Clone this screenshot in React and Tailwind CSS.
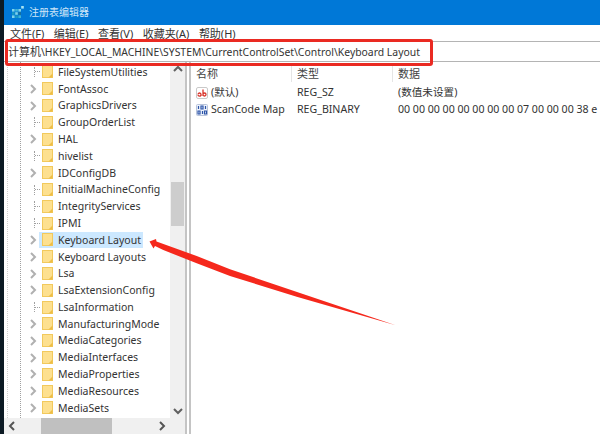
const FONT = "font-['Noto_Sans','Noto_Sans_CJK_SC',sans-serif]";

const treeRows = [
  { name: 'FileSystemUtilities' },
  { name: 'FontAssoc', kids: true },
  { name: 'GraphicsDrivers', kids: true },
  { name: 'GroupOrderList' },
  { name: 'HAL', kids: true },
  { name: 'hivelist' },
  { name: 'IDConfigDB', kids: true },
  { name: 'InitialMachineConfig' },
  { name: 'IntegrityServices' },
  { name: 'IPMI' },
  { name: 'Keyboard Layout', kids: true, selected: true },
  { name: 'Keyboard Layouts', kids: true },
  { name: 'Lsa', kids: true },
  { name: 'LsaExtensionConfig', kids: true },
  { name: 'LsaInformation' },
  { name: 'ManufacturingMode', kids: true },
  { name: 'MediaCategories', kids: true },
  { name: 'MediaInterfaces', kids: true },
  { name: 'MediaProperties', kids: true },
  { name: 'MediaResources', kids: true },
  { name: 'MediaSets', kids: true },
];

const menus = ['文件(F)', '编辑(E)', '查看(V)', '收藏夹(A)', '帮助(H)'];

function AppIcon() {
  return (
    <svg width="12" height="12" viewBox="0 0 12 12" className="shrink-0 -mt-[1px]">
      <rect x="0" y="3" width="2.6" height="2.6" fill="#7fd3e8" />
      <rect x="3.2" y="3" width="2.6" height="2.6" fill="#3fb4d6" />
      <rect x="6.4" y="3" width="2.6" height="2.6" fill="#7fd3e8" />
      <rect x="0" y="6.2" width="2.6" height="2.6" fill="#1a9ac4" />
      <rect x="3.2" y="6.2" width="2.6" height="2.6" fill="#7fd3e8" />
      <rect x="6.4" y="6.2" width="2.6" height="2.6" fill="#1a6f9a" />
      <rect x="0" y="9.4" width="2.6" height="2.6" fill="#7fd3e8" />
      <rect x="3.2" y="9.4" width="2.6" height="2.6" fill="#1a9ac4" />
      <rect x="6.4" y="9.4" width="2.6" height="2.6" fill="#3fb4d6" />
      <rect x="9.2" y="0" width="2.6" height="2.6" fill="#a8e4f2" />
    </svg>
  );
}

function Folder() {
  return (
    <svg width="11" height="13" viewBox="0 0 11 13" className="shrink-0">
      <rect x="0.5" y="0.5" width="10" height="12" fill="#fde08f" stroke="#f2c95c" />
      <path d="M6.5 12.5 L10.5 8.5 L10.5 12.5 Z" fill="#eebd45" />
    </svg>
  );
}

function Chevron({ dir = 'right', className = '', color = '#b0b0b0' }) {
  const paths = {
    right: 'M2 1 L6 5 L2 9',
    left: 'M6 1 L2 5 L6 9',
    up: 'M1 6 L5 2 L9 6',
    down: 'M1 3 L5 7 L9 3',
  };
  return (
    <svg width="10" height="10" viewBox="0 0 10 10" fill="none" className={className}>
      <path d={paths[dir]} stroke={color} strokeWidth="2" />
    </svg>
  );
}

function TreeRow({ row }) {
  return (
    <div className="flex h-[16.8px] items-center">
      <div className="flex w-[34px] shrink-0 items-center justify-end">
        {row.kids ? (
          <Chevron className="-mr-[1px]" />
        ) : (
          <div className="-mr-[2px] flex h-[10px] w-[6px] items-center border-l border-dotted border-[#a0a0a0]">
            <div className="w-full border-t border-dotted border-[#a0a0a0]" />
          </div>
        )}
      </div>
      <div className={`ml-[1px] flex h-[16.8px] items-center gap-[5px] pl-[3px] pr-[2px] ${row.selected ? 'bg-[#cce8ff]' : ''}`}>
        <Folder />
        <span className="whitespace-nowrap text-[10.5px] leading-none text-[#333]">{row.name}</span>
      </div>
    </div>
  );
}

function ListRow({ icon, name, type, data }) {
  return (
    <div className="flex h-[17px] items-center text-[10.6px] leading-none text-[#333]">
      <div className="flex w-[101px] shrink-0 items-center gap-[3px] pl-[5px]">
        {icon}
        <span className="whitespace-nowrap">{name}</span>
      </div>
      <div className="w-[101px] shrink-0 pl-[5px] whitespace-nowrap">{type}</div>
      <div className="whitespace-nowrap pl-[5px]">{data}</div>
    </div>
  );
}

function AbIcon() {
  return (
    <svg width="12" height="12" viewBox="0 0 12 12" className="shrink-0">
      <rect x="0.5" y="0.5" width="11" height="11" rx="1.5" fill="#fff" stroke="#c9c9c9" />
      <path d="M2 7.5 C2 5.5 5 5.5 5 7.5 L5 9 M2 8 C2 9.5 5 9.5 5 8" stroke="#d8332a" strokeWidth="1.3" fill="none" />
      <path d="M7 2.5 L7 9 M7 7.5 C7 5.5 10 5.5 10 7.5 C10 9.5 7 9.5 7 7.5" stroke="#d8332a" strokeWidth="1.3" fill="none" />
    </svg>
  );
}

function BinIcon() {
  return (
    <svg width="12" height="12" viewBox="0 0 12 12" className="shrink-0">
      <rect x="0.5" y="0.5" width="11" height="11" rx="1" fill="#eef3fb" stroke="#b9c4da" />
      <path d="M2.5 2 L2.5 5 M5 2 h2 v3 h-2 z M9.5 2 L9.5 5 M2 7 h2 v3 h-2 z M6.5 7 L6.5 10 M8.5 7 h2 v3 h-2 z" stroke="#2b53a8" strokeWidth="1.2" fill="none" />
    </svg>
  );
}

function Annotations() {
  return (
    <>
      <div className="pointer-events-none absolute left-[5px] top-[39px] h-[27px] w-[428px] rounded-[3px] border-[3px] border-[#ea2a22]" />
      <svg width="600" height="434" className="pointer-events-none absolute left-0 top-0">
        <path
          d="M149.5 241.5 L156 239 L156.5 241.5 L196.7 256 L230 269.3 L395.7 325.3 L296.7 296.7 L230 276 L196.7 263.3 L163.3 250 L155 246 L153.5 248.5 Z"
          fill="#f5281c"
        />
      </svg>
    </>
  );
}

export default function App() {
  return (
    <div className={`relative flex h-[434px] w-[600px] overflow-hidden bg-white ${FONT}`}>
      <div className="h-full w-[4px] shrink-0 bg-[#0c1a24]" />
      <div className="flex min-w-0 flex-1 flex-col">
        <div className="flex h-[25px] shrink-0 items-center gap-[5px] bg-[#0078d7] pb-[1px] pl-[8px]">
          <AppIcon />
          <span className="text-[10px] leading-none text-[#cfe6f8]">注册表编辑器</span>
        </div>

        <div className="flex h-[16px] shrink-0 items-center gap-[9.5px] pl-[6px] text-[11px] leading-none text-[#333]">
          {menus.map((m) => (
            <span key={m} className="whitespace-nowrap">{m}</span>
          ))}
        </div>

        <div className="flex h-[21px] shrink-0 items-center border-y border-[#b4b4b4] pl-[4px] text-[10.4px] leading-none text-[#333]">
          <span className="whitespace-nowrap"><span className="text-[11px]">计算机</span>\HKEY_LOCAL_MACHINE\SYSTEM\CurrentControlSet\Control\Keyboard Layout</span>
        </div>

        <div className="flex min-h-0 flex-1">
          <div className="flex w-[181px] shrink-0 flex-col">
            <div className="flex min-h-0 flex-1">
              <div className="relative w-[166px] shrink-0 overflow-hidden pt-[1.6px]">
                <div className="absolute bottom-0 left-[3px] top-0 border-l border-dotted border-[#d0d0d0]" />
                <div className="absolute bottom-0 left-[16px] top-0 border-l border-dotted border-[#a0a0a0]" />
                {treeRows.map((row) => (
                  <TreeRow key={row.name} row={row} />
                ))}
              </div>
              <div className="flex w-[15px] shrink-0 flex-col items-center bg-[#f0f0f0] pt-[3px]">
                <Chevron dir="up" color="#606060" />
                <div className="mt-[107px] h-[44px] w-[13px] bg-[#cdcdcd]" />
                <div className="flex-1" />
                <Chevron dir="down" color="#606060" className="mb-[2px]" />
              </div>
            </div>
            <div className="flex h-[16px] shrink-0 items-center bg-[#f0f0f0] pl-[4px] pr-[17px]">
              <Chevron dir="left" color="#555" />
              <div className="ml-[23px] h-[16px] w-[71px] bg-[#c0c0c0]" />
              <div className="flex-1" />
              <Chevron dir="right" color="#555" />
            </div>
          </div>

          <div className="flex w-[6px] shrink-0 justify-between bg-white">
            <div className="w-[2px] bg-[#c4c4c4]" />
            <div className="w-[2px] bg-[#c4c4c4]" />
          </div>

          <div className="min-w-0 flex-1 overflow-hidden">
            <div className="flex h-[22px] items-center text-[11px] leading-none text-[#444]">
              <div className="w-[101px] shrink-0 border-r border-[#e5e5e5] pl-[5px] leading-[17px]">名称</div>
              <div className="w-[101px] shrink-0 border-r border-[#e5e5e5] pl-[5px] leading-[17px]">类型</div>
              <div className="pl-[5px]">数据</div>
            </div>
            <ListRow icon={<AbIcon />} name="(默认)" type="REG_SZ" data="(数值未设置)" />
            <ListRow icon={<BinIcon />} name="ScanCode Map" type="REG_BINARY" data="00 00 00 00 00 00 00 00 07 00 00 00 38 e" />
          </div>
        </div>
      </div>
      <Annotations />
    </div>
  );
}
